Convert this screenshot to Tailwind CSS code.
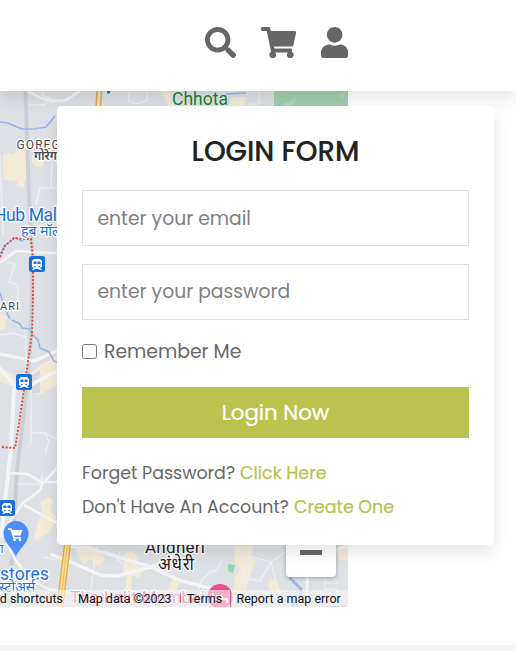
<!DOCTYPE html>
<html lang="en">
<head>
<meta charset="utf-8">
<meta name="viewport" content="width=device-width, initial-scale=1">
<title>Login</title>
<script src="https://cdn.jsdelivr.net/npm/@tailwindcss/browser@4"></script>
</head>
<body class="relative w-[516px] h-[651px] overflow-hidden bg-white font-[Poppins,Inter,sans-serif] text-[#666]">
<header class="relative z-10 flex h-[91px] items-start gap-[24.8px] bg-white pl-[205px] pt-[26.8px] shadow-[0_8px_16px_rgba(0,0,0,0.1)]">
  <svg class="h-[31.25px] w-[31.25px] shrink-0" viewBox="0 0 512 512" fill="#666"><path d="M505 442.7L405.3 343c-4.5-4.5-10.6-7-17-7H372c27.6-35.3 44-79.7 44-128C416 93.1 322.9 0 208 0S0 93.1 0 208s93.1 208 208 208c48.3 0 92.7-16.4 128-44v16.3c0 6.4 2.5 12.5 7 17l99.7 99.7c9.4 9.4 24.6 9.4 33.9 0l28.3-28.3c9.4-9.4 9.4-24.6.1-34zM208 336c-70.7 0-128-57.2-128-128 0-70.7 57.2-128 128-128 70.7 0 128 57.2 128 128 0 70.7-57.2 128-128 128z"/></svg>
  <svg class="h-[31.25px] w-[35.2px] shrink-0" viewBox="0 0 576 512" fill="#666"><path d="M528.12 301.319l47.273-208C578.806 78.301 567.391 64 551.99 64H159.208l-9.166-44.81C147.758 8.021 137.93 0 126.529 0H24C10.745 0 0 10.745 0 24v16c0 13.255 10.745 24 24 24h69.883l70.248 343.435C147.325 417.1 136 435.222 136 456c0 30.928 25.072 56 56 56s56-25.072 56-56c0-15.674-6.447-29.835-16.824-40h209.647C430.447 426.165 424 440.326 424 456c0 30.928 25.072 56 56 56s56-25.072 56-56c0-22.172-12.888-41.332-31.579-50.405l5.517-24.276c3.413-15.018-8.002-29.319-23.403-29.319H218.117l-6.545-32h293.145c11.206 0 20.92-7.754 23.403-18.681z"/></svg>
  <svg class="h-[31.25px] w-[27.3px] shrink-0" viewBox="0 0 448 512" fill="#666"><path d="M224 256c70.7 0 128-57.3 128-128S294.7 0 224 0 96 57.3 96 128s57.3 128 128 128zm89.6 32c-12 0-18 2-25 5-20 9-42 13-64.600 13s-44.600-4-64.600-13c-7-3-13-5-25-5C60.200 288 0 348.200 0 422.400V464c0 26.500 21.500 48 48 48h352c26.500 0 48-21.500 48-48v-41.600c0-74.200-60.200-134.400-134.400-134.400z"/></svg>
</header>

<main class="h-[554px]">
  <div class="relative h-[515.5px] w-[348px] overflow-hidden">
    <svg class="block h-[515.5px] w-[348px]" viewBox="0 91 348 515.5" font-family="Roboto, 'Noto Sans', sans-serif">
      <rect y="91" width="348" height="516" fill="#dde0e5"/>
      <!-- commercial areas and parks -->
      <g fill="#f3ebd6">
        <path d="M4 153l10 1 2-4 11 1v29l-3 1 1 6-8-1v-5l-13-1-2-13z"/>
        <path d="M32 159h11v7l-7 1-4-4z"/>
        <path d="M0 366l17 12 15-6 10-8 15-8v29l-18 10-13-4-26-9z"/>
        <path d="M40 502l8-5 5 3-2 11 5 6-5 13-15 11-2-5 5-16 3-9z"/>
        <path d="M75 546h16l8 5 6 8-6 7-10-7-4 6-6-7z"/>
        <path d="M124 554l8-3 6 5-2 8 8 6-6 8-7-3 1 20h-8l3-17-3-8z"/>
        <path d="M234 546h18l-1 10 5 4-5 12-3 12-3 9-12-1 2-15 5-7-5-8z"/>
        <path d="M269 579l8 1 5 14h-6l-8-7z"/>
        <path d="M336 548l12-3v16l-8-1z"/>
        <path d="M231 97h14v10h-16zM162 91h8l4 15h-6zM0 314l7 3-2 12-5 1z"/>
        <path d="M173 577l8 4-8 14h-8z"/>
      </g>
      <path d="M274 91h74v15h-74z" fill="#a1cfad"/>
      <path d="M281 106l17-10-5 10zM337 96l9-5-3 7z" fill="#afd7b9"/>
      <path d="M228 564l7 1-2 8-5-2z" fill="#99cfae"/>
      <path d="M40 370v23h-8l-2-17z" fill="#d5d9df"/>
      <!-- railway corridor -->
      <path d="M25.500 91l3.500 110 4 60-3 90-6 60-7 60-8 135" fill="none" stroke="#cbcfd4" stroke-width="4"/>
      <!-- local roads -->
      <g fill="none" stroke="#eceef1" stroke-width="1.500" stroke-linejoin="round">
        <path d="M28 105h17l4-10M42 91v4l15 6M38 188h19M40 188l-4 17M52 160l-1 28M0 155l3 80"/>
        <path d="M8 262l7 2-6 18 9 3v25l-10-1M0 335l12-2 14 4v42M31 391v52l-4 4M31 433h14l4 8-4 13M45 433l12 6"/>
        <path d="M17 484h25M42 475l-1 12M0 540l14-2M57 560l-14-3"/>
        <path d="M97 546l-5 35-3 25M120 551l-3 9 8 5-1 8M285 552l-14 10-23-6M271 562l11 44M271 562l-11 19-21-4M253 546l-20 60"/>
        <path d="M222 561l-5 9-7 2-9 9-3 10M325 579v10h12v17M325 583h13M250 104h9v-13M130 91l-2 9 7 4 12-3v-10"/>
      </g>
      <g fill="none" stroke="#f3f4f6" stroke-linejoin="round">
        <path d="M27 91l14 7 11 3 14-1 14-9" stroke-width="2.500"/>
        <path d="M0 263l16-12 17 1 24 1" stroke-width="2.500"/>
        <path d="M0 354l34 7 23-10M0 368l15 18 8 3 34-18" stroke-width="3.500"/>
        <path d="M14 388l-3 60-10 90" stroke-width="4"/>
        <path d="M9 473l19 1 13 8h16M45 481l12-13M0 537l22-33 18-14 3-7M24 505l33 18M0 528l14 30 16 21 18 10 20 3" stroke-width="2.500"/>
        <path d="M309 552l-3 54" stroke-width="3"/>
        <path d="M50 554l23 9 27 12 17 1 37-10 26-14M70 546l26 4 55 17 28 13 45 12M330 552l18-6" stroke-width="3.500"/>
      </g>
      <!-- water -->
      <g fill="none" stroke="#93b6ec" stroke-width="1.500" stroke-linejoin="round">
        <path d="M0 122l8 1 14 6 12 0 12-2 5-6 4-5"/>
        <path d="M0 254l5-9 10-7 8 3M0 293l5 16 5 10M12 320l8 4 2 4 8 1 2 5 6 6 2 8 9 4 5 9 6 2"/>
        <path d="M226 94l20-1"/>
        <path d="M289 577l12 12v6l-9 11" stroke-width="2.500"/>
      </g>
      <!-- highway -->
      <path d="M68 540l-8 66" fill="none" stroke="#e8ad2c" stroke-width="7"/>
      <path d="M68 540l-8 66" fill="none" stroke="#f8dda0" stroke-width="4.500"/>
      <path d="M68 540l-8 66" fill="none" stroke="#edbd55" stroke-width="1"/>
      <path d="M97 91l-1 16M101.500 91l-1 16" fill="none" stroke="#e5a936" stroke-width="1.500"/>
      <circle cx="108.500" cy="92" r="1.700" fill="#1a6fe0"/>
      <!-- district boundary -->
      <path d="M0 257l5-11 9-8 9 1 8 0 2 20 0 35-1 40-8 55-5 35-4 24-14-1" fill="none" stroke="#dc4b42" stroke-width="1.900" stroke-dasharray="2 1.700"/>
      <!-- stations -->
      <defs>
        <g id="station">
          <rect x="-8" y="-8" width="16" height="16" rx="2.500" fill="#1a6fe0"/>
          <path d="M-3-5h6l2 2v6l-2 1 2 2h-2l-1-1h-4l-1 1h-2l2-2-2-1v-6z" fill="#fff"/>
          <path d="M-3.500-2.500h3v2.500h-3zM.5-2.500h3v2.500h-3zM-3 2h1.500v1.300h-1.500zM1.500 2h1.500v1.300h-1.500z" fill="#1a6fe0"/>
        </g>
      </defs>
      <use href="#station" x="37" y="264"/>
      <use href="#station" x="24" y="382"/>
      <use href="#station" x="7" y="508"/>
      <!-- shopping pin -->
      <path d="M16 557c-2-8-12.500-13-12.500-23.500a12.500 12.500 0 0 1 25 0c0 10.500-10.500 15.500-12.500 23.500z" fill="#4d8df6"/>
      <path d="M8 529h3l3 9h7" fill="none" stroke="#fff" stroke-width="1.500"/>
      <path d="M11.500 530h11l-2 5.500h-7.500z" fill="#fff"/><circle cx="14.500" cy="540" r="1.300" fill="#fff"/><circle cx="20" cy="540" r="1.300" fill="#fff"/>
      <!-- place labels -->
      <g stroke="#fff" stroke-width="2.500" stroke-linejoin="round" paint-order="stroke">
        <text x="172" y="105" font-size="17.500" textLength="56" fill="#188038" stroke="#e4efe8" stroke-width="1.500">Chhota</text>
        <text x="16.500" y="149" font-size="12" letter-spacing="1.100" fill="#45494e">GOREGAON</text>
        <text x="34" y="160" font-size="12" font-weight="600" fill="#45494e">गोरेगांव</text>
        <text x="-6" y="221" font-size="17.500" textLength="63" fill="#1a6fe0">Hub Mal</text>
        <text x="21" y="236" font-size="14" fill="#1a6fe0">हब मॉल</text>
        <text x="0" y="309.500" font-size="11" fill="#45494e" textLength="19">ARI</text>
        <text x="-7" y="553" font-size="13" fill="#1a6fe0">ना</text>
        <text x="0" y="579.500" font-size="17.500" textLength="49" fill="#1a6fe0">stores</text>
        <text x="-1" y="592" font-size="14" fill="#1a6fe0">स्टोअर्स</text>
        <text x="145" y="553" font-size="17" textLength="60" fill="#202124">Andheri</text>
        <text x="158" y="570" font-size="17" textLength="36" fill="#202124">अंधेरी</text>
        <text x="70" y="602.500" font-size="17" textLength="135" fill="#e83f7b">The Lalit Mumbai</text>
        <text x="158" y="618" font-size="17" fill="#e83f7b">Central</text>
      </g>
      <circle cx="220" cy="596.500" r="12.500" fill="#ee4e8b"/>
      <path d="M213 593v10M213 599h14v4M216 596h5l2 3" fill="none" stroke="#fff" stroke-width="2"/>
      <text x="326" y="614" font-size="11" fill="#888">URS</text>
    </svg>
    <!-- zoom control -->
    <div class="absolute left-[286px] top-[400px] flex h-[86px] w-[50px] items-end justify-center rounded-sm bg-white pb-[22px] shadow-[0_1px_4px_rgba(0,0,0,0.3)]"><span class="h-[5.500px] w-[22px] bg-[#666]"></span></div>
    <!-- map attribution -->
    <div class="absolute bottom-0 right-0 flex h-[17px] w-[348px] items-center bg-[#f5f5f5]/60 font-[Roboto,sans-serif] text-[12.500px] leading-[17px] text-[#111]">
      <span class="-ml-[53px] w-[116px] shrink-0 whitespace-nowrap text-right">Keyboard shortcuts</span>
      <span class="ml-[15px] w-[94px] shrink-0 whitespace-nowrap">Map data ©2023</span>
      <span class="ml-[7.500px] h-[10px] w-px shrink-0 bg-[#e0397a]/80"></span>
      <span class="ml-[6.500px] w-[35px] shrink-0">Terms</span>
      <span class="ml-[7.500px] h-[17px] w-px shrink-0 bg-[#e0397a]/80"></span>
      <span class="ml-[6px] shrink-0 whitespace-nowrap">Report a map error</span>
    </div>
  </div>
</main>
<footer class="h-[6px] bg-[#f3f3f3]"></footer>

<form class="absolute left-[57px] top-[106px] z-20 flex h-[439px] w-[437px] flex-col rounded-[5px] bg-white px-[25px] pt-[26px] shadow-[0_8px_16px_rgba(0,0,0,0.1)]">
  <h3 class="h-[58px] text-center text-[27.700px] leading-[40px] font-medium text-[#222] [-webkit-text-stroke:0.200px_#222]">LOGIN FORM</h3>
  <input type="email" placeholder="enter your email" class="h-[56px] w-full border border-[#e1e1e1] px-[14.500px] pt-px text-[18.750px] placeholder:text-[#808080] placeholder:opacity-100">
  <input type="password" placeholder="enter your password" class="mt-[18px] h-[56px] w-full border border-[#e1e1e1] px-[14.500px] pb-px text-[18.750px] placeholder:text-[#808080] placeholder:opacity-100">
  <label class="mt-[17px] flex h-[29px] items-center gap-[7px] text-[18.750px]"><input type="checkbox" class="h-[15px] w-[15px] shrink-0"><span class="pt-[2px]">Remember Me</span></label>
  <button type="button" class="mt-[21px] h-[51px] w-full bg-[#bac34e] text-[21.250px] text-white [-webkit-text-stroke:0.200px_#fff]">Login Now</button>
  <p class="mt-[18px] flex h-[34px] items-center gap-[5px] text-[17.450px]"><span>Forget Password?</span><a class="text-[#bac34e] [-webkit-text-stroke:0.250px_#bac34e]">Click Here</a></p>
  <p class="flex h-[34px] items-center gap-[5px] text-[17.450px]"><span>Don't Have An Account?</span><a class="text-[#bac34e] [-webkit-text-stroke:0.250px_#bac34e]">Create One</a></p>
</form>
</body>
</html>
